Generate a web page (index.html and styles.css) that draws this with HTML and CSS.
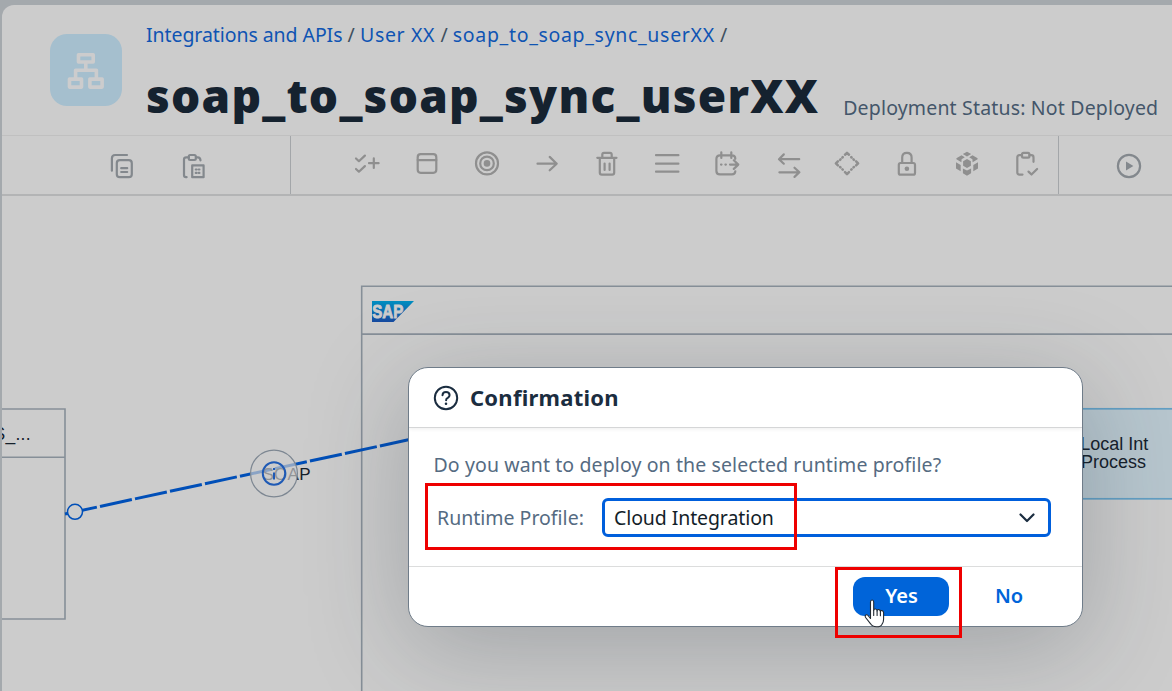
FILE: index.html
```html
<!DOCTYPE html>
<html lang="en">
<head>
<meta charset="utf-8">
<title>soap_to_soap_sync_userXX</title>
<link rel="stylesheet" href="styles.css">
</head>
<body>
<div class="page">
  <header class="header">
    <div class="app-icon">
      <svg width="72" height="72" viewBox="0 0 72 72" fill="none" stroke="#cccccd" stroke-width="3.6" stroke-linejoin="round">
        <rect x="28.5" y="20.8" width="14.7" height="7.2"/><rect x="19.5" y="45.1" width="12" height="8"/><rect x="39.9" y="45.1" width="12.2" height="8"/>
        <path d="M35.8 28v8M25.6 45v-8.8h20.8V45"/>
      </svg>
    </div>
    <div class="heading">
      <nav class="crumbs"><a class="crumb crumb-root">Integrations and APIs</a><span class="sep">/</span><a class="crumb crumb-user">User XX</a><span class="sep">/</span><a class="crumb crumb-flow">soap_to_soap_sync_userXX</a><span class="sep">/</span></nav>
      <div class="title-row"><h1 class="title">soap_to_soap_sync_userXX</h1><span class="status">Deployment Status: Not Deployed</span></div>
    </div>
  </header>

  <div class="toolbar">
    <div class="tools tools-edit">
      <svg class="icon" viewBox="0 0 24 24"><path d="M1.9 16.7V4.4Q1.9 1 5.2 1H17"/><rect x="6.8" y="6.2" width="15" height="17" rx="3"/><path d="M11.2 14.2h6M11.2 18h6"/></svg>
      <svg class="icon" viewBox="0 0 24 24"><path d="M4.6 23.2H4Q2 23.2 2 21V5.6Q2 3.3 4.2 3.3H6.6M14.2 3.3h1.6q2.4 0 2.7 3"/><rect x="6.8" y="1" width="7" height="5" rx="1.4"/><rect x="10.2" y="11.4" width="11.4" height="11.8"/><path d="M13.8 15.5h.8M16.8 15.5h.6M13.8 18.9h.8M16.8 18.9h.6"/></svg>
    </div>
    <div class="tools tools-palette">
      <svg class="icon" viewBox="0 0 24 24"><path d="M1 6.5l2.9 2.7 6-5.6M1 17l2.9 2.7 6-5.6M14 11.2h9.6M18.8 6.4V16"/></svg>
      <svg class="icon" viewBox="0 0 24 24"><rect x="2.7" y="2.2" width="18.6" height="18.6" rx="3"/><path d="M2.7 8.1h18.6"/></svg>
      <svg class="icon" viewBox="0 0 24 24"><circle cx="12" cy="11.4" r="11"/><circle cx="12" cy="11.4" r="6.8"/><circle class="solid" cx="12" cy="11.4" r="3.3"/></svg>
      <svg class="icon" viewBox="0 0 24 24"><path d="M2.5 11.7h19.2M14.7 4.9l7 6.8-7 6.6"/></svg>
      <svg class="icon" viewBox="0 0 24 24"><path d="M2.3 5.8h19.2M7.3 5.5V2.6Q7.3.8 9 .8h6q1.7 0 1.7 1.8v2.9M4.8 5.8v14.6q0 2.2 2 2.2h10.4q2 0 2-2.2V5.8M9.6 11.5v6.4M14.6 11.5v6.4"/></svg>
      <svg class="icon" viewBox="0 0 24 24"><path d="M1 3.2h22.4M1 11.7h22.4M1 19.7h22.4"/></svg>
      <svg class="icon" viewBox="0 0 24 24"><path d="M20.3 6.8Q20.3 3.3 17 3.3H5Q1.4 3.3 1.4 7V19q0 3.4 3.6 3.4h12q3 0 3.3-3M6.3.3v5.6M16.3.3v5.6M15 12.6h8.3M18.8 8.3l4.5 4.3-4.5 4.3M6 12.6h.5M10.4 12.6h.5"/></svg>
      <svg class="icon" viewBox="0 0 24 24"><path d="M24.2 7.2H4.3M8.8 2.4L4 7.2l4.8 4.5M4.4 20.3h19.8M19.5 15.7l4.9 4.6-4.9 4.6"/></svg>
      <svg class="icon" viewBox="0 0 24 24"><path stroke-width="2.5" d="M10 2.7L12 .9l2 1.8M21.1 9.4l2 2-2 2M14 20.1l-2 2-2-2M2.9 13.4l-2-2 2-2M16.2 5.1l.4.4M18.5 7.4l.4.4M18.9 15l-.4.4M16.6 17.3l-.4.4M7.8 17.7l-.4-.4M5.5 15.4l-.4-.4M5.1 7.8l.4-.4M7.4 5.5l.4-.4"/></svg>
      <svg class="icon" viewBox="0 0 24 24"><rect x="3.8" y="11" width="16.2" height="11.7" rx="1.8"/><path d="M7.2 11V5.6Q7.2.8 11.9.8t4.7 4.8V11"/><circle class="solid" cx="11.9" cy="16.8" r="2.3"/></svg>
      <svg class="icon" viewBox="0 0 24 24"><path class="solid" d="M12-.3l4.2 2.3L12 4.4 7.8 2zM6.5 3.3l3.3 2-3.2 1.9-.2 3.1-5-3V6.2zM17.5 3.3l-3.3 2 3.2 1.9.2 3.1 5-3V6.2zM12 7l3.9 2.2v4.5L12 16l-3.9-2.3V9.2zM1 10.3l4.7 2.8v6.2L1 16.5zM23 10.3l-4.7 2.8v6.2l4.7-2.8zM7.9 16.6l4.1 2 4.1-2v4.6L12 23.7l-4.1-2.5z"/></svg>
      <svg class="icon" viewBox="0 0 24 24"><path d="M7.5 22.6H4.4Q2.3 22.6 2.3 20.4V5.4Q2.3 3.2 4.4 3.2H7M14.5 3.2h1.8q2.2 0 2.2 2.2v4.4M13.5 19.6l3 2.9 5.6-5.5"/><rect x="7" y=".8" width="7.4" height="4.8" rx="1.4"/></svg>
    </div>
    <div class="tools tools-run">
      <svg class="icon" viewBox="0 0 24 24"><circle cx="12" cy="12" r="11.1"/><path class="solid" d="M9 7.4v9.2L16.4 12z"/></svg>
    </div>
  </div>

  <main class="canvas">
    <svg class="diagram" width="1170" height="495" viewBox="2 196 1170 495">
      <g fill="none" stroke="#868f98" stroke-width="1.6">
        <path d="M0 409H65V619H0M0 457.2H65"/>
        <path d="M1172 286.2H361.7V700M361.7 334.1H1172"/>
      </g>
      <text class="label" x="-6.5" y="439.5" font-size="17.5" textLength="37">S_...</text>
      <path d="M65 514L415 438.4" stroke="#004fb8" stroke-width="3" stroke-dasharray="32.6 3.2"/>
      <circle cx="75" cy="511.8" r="7.5" fill="#cccccc" stroke="#004fb8" stroke-width="1.5"/>
      <text class="label" x="262.5" y="479.5" font-size="17" textLength="48">SOAP</text>
      <circle cx="274" cy="473.5" r="23.4" fill="#cccccc" fill-opacity=".68" stroke="#7d8792" stroke-width="1.2"/>
      <circle cx="274" cy="473.5" r="11.2" fill="none" stroke="#1f5ab5" stroke-width="2"/>
      <path d="M274 472.5v7M274 468v2" stroke="#1f5ab5" stroke-width="2"/>
      <defs><linearGradient id="sap" x1="0" y1="0" x2="0" y2="1"><stop offset="0" stop-color="#008fc1"/><stop offset="1" stop-color="#174aa0"/></linearGradient></defs>
      <path d="M372 301h42l-20.5 21H372z" fill="url(#sap)"/>
      <text class="logo" x="372.3" y="318" textLength="31" lengthAdjust="spacingAndGlyphs">SAP</text>
      <rect x="1000" y="408.8" width="200" height="90" fill="#b7c6ce" stroke="#629fc4" stroke-width="1.7"/>
      <text class="label" x="1080.2" y="450" font-size="18" textLength="68">Local Int</text>
      <text class="label" x="1081" y="468" font-size="18" textLength="65">Process</text>
    </svg>
  </main>
</div>

<section class="dialog">
  <header class="dialog-head">
    <svg width="26" height="26" viewBox="0 0 26 26" fill="none" stroke="#1b2d40" stroke-width="2" stroke-linecap="round"><circle cx="13" cy="13" r="11.2"/><path d="M9.5 10.2Q9.6 6.9 13 6.9t3.6 3.2q0 1.8-1.8 2.8-1.7.8-1.7 2.3"/><circle cx="13" cy="18.8" r=".6" fill="#1b2d40" stroke-width="1.4"/></svg>
    <h2 class="dialog-title">Confirmation</h2>
  </header>
  <div class="dialog-body">
    <p class="question">Do you want to deploy on the selected runtime profile?</p>
    <div class="field">
      <label class="field-label">Runtime Profile:</label>
      <div class="select"><span class="select-value">Cloud Integration</span>
        <svg width="16" height="10" viewBox="0 0 16 10" fill="none" stroke="#1b2d40" stroke-width="2.2" stroke-linecap="round" stroke-linejoin="round"><path d="M1.5 1.5L8 8l6.5-6.5"/></svg>
      </div>
    </div>
  </div>
  <footer class="dialog-foot">
    <button class="btn btn-yes">Yes</button>
    <button class="btn btn-no">No</button>
  </footer>
</section>

<div class="mark mark-profile"></div>
<div class="mark mark-yes"></div>
<svg class="pointer" width="22" height="30" viewBox="0 0 22 30"><path d="M6.5 19.5V3Q6.5 1 8.1 1t1.6 2v8.5q0-1.6 1.7-1.5t1.7 1.9q.2-1.6 1.8-1.3 1.5.3 1.5 2 .2-1.3 1.7-1 1.5.4 1.5 2.2V20q0 3-1.4 4.8-1 3-5.8 3-4.3 0-6-3.2L1.6 18.5Q.6 16.4 2 15.9q1.4-.4 2.6 1.2z" fill="#fff" stroke="#222a33" stroke-width="1.1" stroke-linejoin="round"/><path d="M9.7 11.5v5M13.1 12v4.5M16.4 12.6v4.2" stroke="#222a33" stroke-width="1.1" stroke-linecap="round"/></svg>
</body>
</html>
```
FILE: styles.css
```css
* { box-sizing: border-box; }

body {
  margin: 0;
  width: 1172px;
  height: 691px;
  overflow: hidden;
  position: relative;
  background: #a4a9ad;
  font-family: "Noto Sans", "Open Sans", sans-serif;
}

.page {
  margin: 5px 0 0 2px;
  height: 686px;
  background: #cccccc;
  border-top-left-radius: 12px;
  overflow: hidden;
}

.header { height: 130px; display: flex; padding-left: 48px; }

.app-icon {
  width: 72px;
  height: 72px;
  margin-top: 29px;
  border-radius: 17px;
  background: #a5bfce;
}

.heading { margin-left: 24px; white-space: nowrap; }

.crumbs {
  display: flex;
  margin-top: 15px;
  line-height: 29px;
  font-size: 19.5px;
  color: #0f54b3;
}
.crumb-root { letter-spacing: -.07px; }
.crumb-user { letter-spacing: .65px; }
.crumb-flow { letter-spacing: .68px; }

.sep { color: #3f5060; margin: 0 5.2px; }

.title-row { display: flex; align-items: baseline; }

.title {
  margin: 13px 0 0;
  line-height: 66px;
  font-size: 46px;
  font-weight: 900;
  letter-spacing: 1.23px;
  color: #15222f;
}

.status { position: relative; top: 1.5px; margin-left: 24px; font-size: 19.5px; letter-spacing: .17px; color: #44566a; }

.toolbar {
  height: 61px;
  display: flex;
  border-top: 1px solid #c0c0c0;
  border-bottom: 2px solid #b3b4b5;
}

.tools { display: flex; }
.tools-edit { width: 289px; padding: 18px 0 0 108px; gap: 48px; border-right: 1px solid #a3a6a9; }
.tools-palette { width: 768px; padding: 16px 0 0 64.4px; gap: 36px; border-right: 1px solid #a3a6a9; }
.tools-run { padding: 18px 0 0 58.4px; }

.icon {
  width: 24px;
  height: 24px;
  flex: none;
  overflow: visible;
  fill: none;
  stroke: #8f8f8f;
  stroke-width: 2.2;
  stroke-linecap: round;
  stroke-linejoin: round;
}
.icon .solid { fill: #8f8f8f; stroke: none; }
.tools-edit .icon, .tools-run .icon { stroke: #83888d; }
.tools-run .icon .solid { fill: #83888d; }

.canvas { height: 495px; }
.diagram { display: block; }
.label { font-family: "Liberation Sans", Arial, sans-serif; fill: #15202b; }
.logo { font-family: "Liberation Sans", Arial, sans-serif; font-weight: 700; font-size: 18px; fill: #cccccc; stroke: #cccccc; stroke-width: .9; }

.dialog {
  position: absolute;
  left: 408px;
  top: 367px;
  width: 674.5px;
  height: 260px;
  border: 1.5px solid #6f7c89;
  border-radius: 20px;
  background: #fff;
  overflow: hidden;
  box-shadow: 0 20px 100px rgba(34, 45, 58, .26);
}

.dialog-head {
  height: 60px;
  display: flex;
  align-items: center;
  gap: 11.5px;
  padding-left: 23.5px;
  border-bottom: 1px solid #d5d6d7;
  box-shadow: 0 1px 4px rgba(0, 0, 0, .07);
}

.dialog-title { margin: 0 0 1px; font-size: 22px; font-weight: 700; letter-spacing: .25px; color: #1b2d40; }

.dialog-body { height: 138px; padding: 23px 31px 0 24.5px; color: #556b82; font-size: 19.5px; white-space: nowrap; }
.question { margin: 0; line-height: 28px; letter-spacing: .11px; }
.field { display: flex; align-items: center; justify-content: space-between; margin-top: 19px; padding-left: 3.5px; }
.field-label { line-height: 28px; }

.select {
  width: 449px;
  height: 39px;
  display: flex;
  align-items: center;
  justify-content: space-between;
  padding: 0 13px 0 9.5px;
  border: 3px solid #005fdc;
  border-radius: 6px;
  color: #131e29;
}
.select-value { letter-spacing: -.1px; }

.dialog-foot {
  height: 60px;
  display: flex;
  align-items: flex-start;
  gap: 19px;
  padding: 10px 0 0 444px;
  border-top: 1px solid #dcdddd;
}

.btn {
  height: 39px;
  border: 0;
  border-radius: 12px;
  padding: 0 0 2px;
  font: 600 20px "Noto Sans", sans-serif;
}
.btn-yes { width: 96px; padding-left: 1px; background: #0064d9; color: #fff; }
.btn-no { width: 82px; background: transparent; color: #0064d9; }

.mark { position: absolute; border: 3px solid #ee0000; }
.mark-profile { left: 425px; top: 483px; width: 372px; height: 67px; }
.mark-yes { left: 835px; top: 567px; width: 127px; height: 71px; }

.pointer { position: absolute; left: 863.5px; top: 598.5px; }
```
